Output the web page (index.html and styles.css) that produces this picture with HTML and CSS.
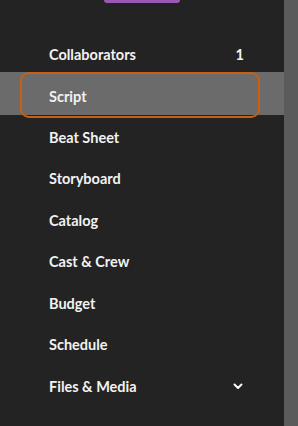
FILE: index.html
```html
<!DOCTYPE html>
<html lang="en">
<head>
  <meta charset="UTF-8" />
  <meta name="viewport" content="width=device-width, initial-scale=1.0" />
  <title>Project Menu</title>
  <link rel="stylesheet" href="styles.css">
</head>
<body>
  <div class="layout">
    <aside class="sidebar">
      <div class="pill"></div>
      <ul class="menu">
        <li class="item"><a class="link" href="#">Collaborators <span class="count">1</span></a></li>
        <li class="item active"><a class="link" href="#">Script</a></li>
        <li class="item"><a class="link" href="#">Beat Sheet</a></li>
        <li class="item"><a class="link" href="#">Storyboard</a></li>
        <li class="item"><a class="link" href="#">Catalog</a></li>
        <li class="item"><a class="link" href="#">Cast &amp; Crew</a></li>
        <li class="item"><a class="link" href="#">Budget</a></li>
        <li class="item"><a class="link" href="#">Schedule</a></li>
        <li class="item">
          <a class="link" href="#">Files &amp; Media
            <svg class="chevron" width="10" height="7" viewBox="0 0 10 7"><path d="M1.5 1.5 L5 5 L8.5 1.5" fill="none" stroke="#fff" stroke-width="2" stroke-linecap="round" stroke-linejoin="round"/></svg>
          </a>
        </li>
      </ul>
    </aside>
    <div class="scrollbar"></div>
  </div>
</body>
</html>
```

FILE: styles.css
```css
body {
  margin: 0;
  background: #232323;
  font-family: Lato, "Noto Sans", sans-serif;
  color: #f2f2f2;
}
.layout {
  display: flex;
  height: 426px;
  overflow: hidden;
}
.sidebar {
  width: 284px;
  background: #232323;
}
.scrollbar {
  width: 14px;
  background: #5b5b5b;
}
.pill {
  width: 76px;
  height: 3px;
  margin-left: 104px;
  background: #9b59b6;
  border-radius: 0 0 8px 8px;
}
.menu {
  list-style: none;
  margin: 30px 0 0;
  padding: 0;
}
.item {
  height: 41.5px;
}
.item:first-child {
  height: 40px;
}
.link {
  display: flex;
  align-items: center;
  justify-content: space-between;
  box-sizing: border-box;
  height: 100%;
  margin-left: 20px;
  width: 240px;
  padding: 3px 16px 0 29px;
  color: #f2f2f2;
  text-decoration: none;
  font-size: 14.5px;
  font-weight: 700;
}
.item.active {
  height: 43px;
  background: #6b6b6b;
}
.item.active .link {
  height: 46px;
  margin-top: -1px;
  padding: 2px 16px 0 27px;
  border: 2px solid #c95f0f;
  border-radius: 9px;
}
.count {
  font-weight: 700;
}
.chevron {
  margin-right: 1px;
  margin-top: 1px;
}
```
